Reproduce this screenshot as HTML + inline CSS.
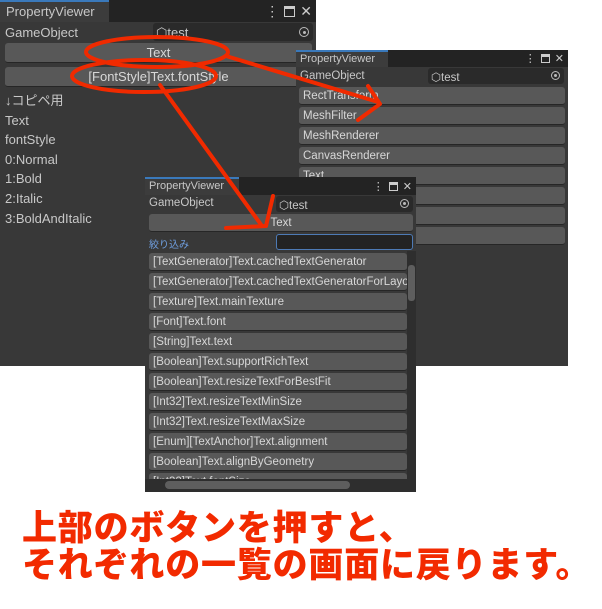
<!DOCTYPE html>
<html><head><meta charset="utf-8"><style>
*{margin:0;padding:0;box-sizing:border-box}
body{width:602px;height:609px;background:#fff;position:relative;overflow:hidden;font-family:"Liberation Sans","Noto Sans CJK JP",sans-serif}
.win{position:absolute;background:#383838;color:#c8c8c8;overflow:hidden}
.hdr{position:absolute;left:0;top:0;right:0;background:#232323}
.tab{position:absolute;left:0;top:0;bottom:0;background:#3c3c3c;border-top:2px solid #3a79bb;padding-left:6px}
.icons{position:absolute;right:4px;top:0;bottom:0;display:flex;align-items:center;gap:5px;color:#ccc}
.sq{display:inline-block;border:1.5px solid #ccc;border-top-width:3px}
.abs{position:absolute;white-space:nowrap}
.btn{position:absolute;background:#585858;border-radius:3px;border-bottom:1px solid #262626;color:#d8d8d8;white-space:nowrap;overflow:hidden}
.field{position:absolute;background:#2a2a2a;border-radius:3px}
.tgt{position:absolute;border:1.5px solid #bbb;border-radius:50%}
.tgt:after{content:"";position:absolute;left:50%;top:50%;width:3px;height:3px;margin:-1.5px;background:#bbb;border-radius:50%}
.big{position:absolute;left:22px;color:#f22a00;font-family:"Noto Sans CJK JP",sans-serif;font-weight:900;font-size:35px;letter-spacing:0.8px;white-space:nowrap;line-height:1}
.l .btn{line-height:19px}
</style></head><body>

<!-- Window 1 -->
<div class="win" style="left:0;top:0;width:316px;height:366px">
 <div class="hdr" style="height:22px"><div class="tab" style="width:109px;font-size:13px;line-height:19px">PropertyViewer</div>
  <div class="icons" style="font-size:14px"><span>⋮</span><span class="sq" style="width:11px;height:11px"></span><span>✕</span></div></div>
 <div class="abs" style="left:5px;top:25px;font-size:13px">GameObject</div>
 <div class="field" style="left:153px;top:23px;width:160px;height:18px"><span class="abs" style="left:3px;top:2px;font-size:13px">⬡test</span><span class="tgt" style="right:4px;top:4px;width:10px;height:10px"></span></div>
 <div class="btn" style="left:5px;top:43px;width:307px;height:20px;text-align:center;font-size:13px;line-height:20px">Text</div>
 <div class="btn" style="left:5px;top:67px;width:307px;height:20px;text-align:center;font-size:13px;line-height:20px">[FontStyle]Text.fontStyle</div>
 <div class="abs" style="left:5px;top:91px;font-size:13px;line-height:19.6px">↓コピペ用<br>Text<br>fontStyle<br>0:Normal<br>1:Bold<br>2:Italic<br>3:BoldAndItalic</div>
</div>

<!-- Window 2 -->
<div class="win" style="left:296px;top:50px;width:272px;height:316px">
 <div class="hdr" style="height:17px"><div class="tab" style="width:92px;font-size:11px;line-height:14px;padding-left:4px">PropertyViewer</div>
  <div class="icons" style="font-size:11px"><span>⋮</span><span class="sq" style="width:9px;height:9px"></span><span>✕</span></div></div>
 <div class="abs" style="left:4px;top:20px;font-size:11.5px">GameObject</div>
 <div class="field" style="left:132px;top:18px;width:136px;height:16px"><span class="abs" style="left:3px;top:2px;font-size:11.5px">⬡test</span><span class="tgt" style="right:4px;top:3px;width:9px;height:9px"></span></div>
 <div class="l" style="font-size:11.5px">
 <div class="btn" style="left:3px;top:37px;width:266px;height:18px;padding-left:4px">RectTransform</div>
 <div class="btn" style="left:3px;top:57px;width:266px;height:18px;padding-left:4px">MeshFilter</div>
 <div class="btn" style="left:3px;top:77px;width:266px;height:18px;padding-left:4px">MeshRenderer</div>
 <div class="btn" style="left:3px;top:97px;width:266px;height:18px;padding-left:4px">CanvasRenderer</div>
 <div class="btn" style="left:3px;top:117px;width:266px;height:18px;padding-left:4px">Text</div>
 <div class="btn" style="left:3px;top:137px;width:266px;height:18px"></div>
 <div class="btn" style="left:3px;top:157px;width:266px;height:18px"></div>
 <div class="btn" style="left:3px;top:177px;width:266px;height:18px"></div>
 </div>
</div>

<!-- Window 3 -->
<div class="win" style="left:145px;top:177px;width:271px;height:315px">
 <div class="hdr" style="height:18px"><div class="tab" style="width:94px;font-size:11px;line-height:15px;padding-left:4px">PropertyViewer</div>
  <div class="icons" style="font-size:11px"><span>⋮</span><span class="sq" style="width:9px;height:9px"></span><span>✕</span></div></div>
 <div class="abs" style="left:4px;top:20px;font-size:11.5px">GameObject</div>
 <div class="field" style="left:131px;top:19px;width:137px;height:16px"><span class="abs" style="left:3px;top:2px;font-size:11.5px">⬡test</span><span class="tgt" style="right:4px;top:3px;width:9px;height:9px"></span></div>
 <div class="btn" style="left:4px;top:37px;width:264px;height:18px;text-align:center;font-size:11.5px;line-height:18px">Text</div>
 <div class="abs" style="left:4px;top:59px;font-size:10px;color:#6f9fe0">絞り込み</div>
 <div class="field" style="left:131px;top:57px;width:137px;height:16px;border:1px solid #4d7ab5;background:#232323"></div>
 <div class="abs l" style="left:4px;top:76px;width:258px;font-size:11.5px">
  <div class="btn" style="left:0;top:0;width:258px;height:18px;padding-left:4px">[TextGenerator]Text.cachedTextGenerator</div>
  <div class="btn" style="left:0;top:20px;width:258px;height:18px;padding-left:4px">[TextGenerator]Text.cachedTextGeneratorForLayout</div>
  <div class="btn" style="left:0;top:40px;width:258px;height:18px;padding-left:4px">[Texture]Text.mainTexture</div>
  <div class="btn" style="left:0;top:60px;width:258px;height:18px;padding-left:4px">[Font]Text.font</div>
  <div class="btn" style="left:0;top:80px;width:258px;height:18px;padding-left:4px">[String]Text.text</div>
  <div class="btn" style="left:0;top:100px;width:258px;height:18px;padding-left:4px">[Boolean]Text.supportRichText</div>
  <div class="btn" style="left:0;top:120px;width:258px;height:18px;padding-left:4px">[Boolean]Text.resizeTextForBestFit</div>
  <div class="btn" style="left:0;top:140px;width:258px;height:18px;padding-left:4px">[Int32]Text.resizeTextMinSize</div>
  <div class="btn" style="left:0;top:160px;width:258px;height:18px;padding-left:4px">[Int32]Text.resizeTextMaxSize</div>
  <div class="btn" style="left:0;top:180px;width:258px;height:18px;padding-left:4px">[Enum][TextAnchor]Text.alignment</div>
  <div class="btn" style="left:0;top:200px;width:258px;height:18px;padding-left:4px">[Boolean]Text.alignByGeometry</div>
  <div class="btn" style="left:0;top:220px;width:258px;height:18px;padding-left:4px">[Int32]Text.fontSize</div>
 </div>
 <div class="abs" style="left:262px;top:74px;width:9px;height:228px;background:#2e2e2e"></div>
 <div class="abs" style="left:263px;top:88px;width:7px;height:36px;background:#5e5e5e;border-radius:3px"></div>
 <div class="abs" style="left:0;top:302px;width:271px;height:13px;background:#2e2e2e"></div>
 <div class="abs" style="left:20px;top:304px;width:185px;height:8px;background:#5e5e5e;border-radius:4px"></div>
</div>

<svg class="abs" style="left:0;top:0" width="602" height="609" viewBox="0 0 602 609">
 <g fill="none" stroke="#f02a00" stroke-width="4" stroke-linecap="round" stroke-linejoin="round">
  <ellipse cx="157" cy="52" rx="71" ry="15"/>
  <ellipse cx="144" cy="76" rx="72" ry="16"/>
  <path d="M226 56 L378 102"/>
  <path d="M368 86 L380 104 L358 120"/>
  <path d="M160 85 L262 226"/>
  <path d="M273 196 L266 226 L226 228"/>
 </g>
</svg>

<div class="big" style="top:508px">上部のボタンを押すと、</div>
<div class="big" style="top:545px">それぞれの一覧の画面に戻ります。</div>
</body></html>
